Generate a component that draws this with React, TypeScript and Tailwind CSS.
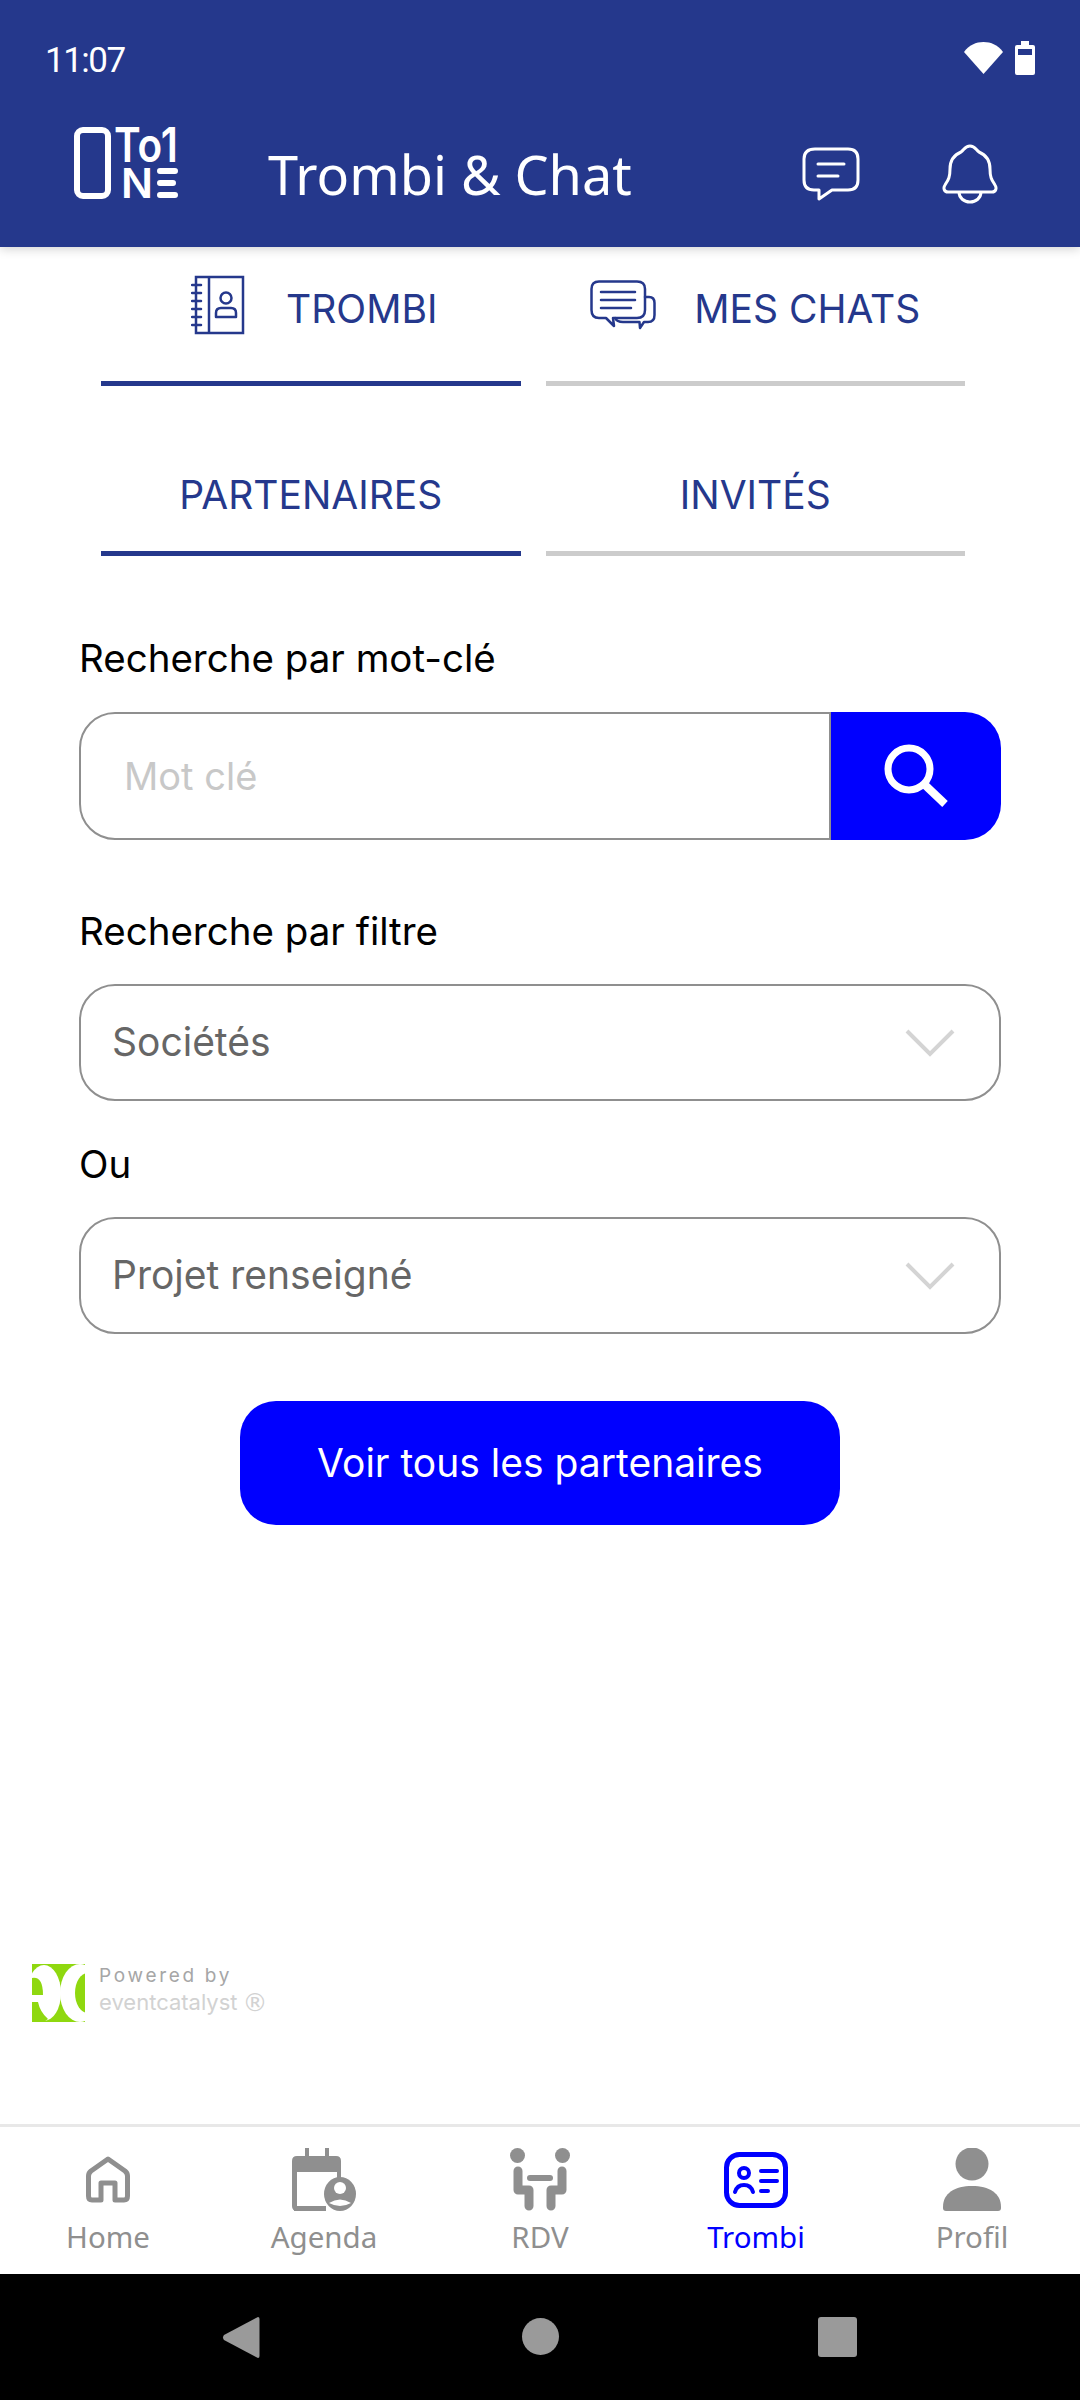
const navy = "text-[#25388c]";

function Logo() {
  return (
    <svg width="106" height="74" viewBox="0 0 106 74" className="overflow-visible text-white">
      <rect x="3" y="3" width="31" height="66" rx="6" fill="none" stroke="currentColor" strokeWidth="6" />
      <text x="40" y="35" fontFamily="Inter, sans-serif" fontWeight="600" fontSize="48" textLength="64" lengthAdjust="spacingAndGlyphs" fill="currentColor">To1</text>
      <text x="47" y="71" fontFamily="Inter, sans-serif" fontWeight="600" fontSize="41" textLength="32" lengthAdjust="spacingAndGlyphs" fill="currentColor">N</text>
      <path d="M86 44H101M86 56H99M86 68H101" stroke="currentColor" strokeWidth="6" strokeLinecap="round" />
    </svg>
  );
}

function EcLogo() {
  return (
    <svg width="53" height="58" viewBox="0 0 53 58">
      <rect width="53" height="58" fill="#8fd80f" />
      <ellipse cx="12" cy="29" rx="17" ry="28" fill="white" />
      <path d="M0 14Q11 12 11 31H0Z" fill="#8fd80f" />
      <path d="M0 38H6Q8 48 16 55L12 58H0Z" fill="#8fd80f" />
      <ellipse cx="48" cy="29" rx="20" ry="29" fill="white" />
      <ellipse cx="56" cy="29" rx="13" ry="20" fill="#8fd80f" />
    </svg>
  );
}

function ChatIcon() {
  return (
    <svg width="58" height="55" viewBox="0 0 58 55" fill="none" stroke="white" strokeWidth="3" strokeLinejoin="round" strokeLinecap="round">
      <path d="M13 2H46Q56 2 56 12V33Q56 43 46 43H30L17 52V43H12Q2 43 2 33V12Q2 2 13 2Z" />
      <path d="M16 17H42M16 29H36" />
    </svg>
  );
}

function BellIcon() {
  return (
    <svg width="56" height="60" viewBox="0 0 56 60" fill="none" stroke="white" strokeWidth="3" strokeLinejoin="round">
      <path d="M28 2C33 2 34 6 37 8C44 11 48 17 48 25C48 34 50 36 53 41C55 44 54 48 50 48H6C2 48 1 44 3 41C6 36 8 34 8 25C8 17 12 11 19 8C22 6 23 2 28 2Z" />
      <path d="M17 48C17 54 22 58 28 58C34 58 39 54 39 48" />
    </svg>
  );
}

function NotebookIcon() {
  return (
    <svg width="54" height="60" viewBox="0 0 54 60" fill="none" stroke="#25388c" strokeWidth="2.5">
      <path d="M5 2H52V58H5Z" />
      <path d="M18 2V58" strokeWidth="2.5" />
      <path d="M1 10H10M1 18H10M1 26H10M1 34H10M1 42H10M1 50H10" strokeLinecap="round" />
      <circle cx="35" cy="23" r="5.5" />
      <path d="M25 42V38Q25 33 30 33H40Q45 33 45 38V42Z" strokeLinejoin="round" />
    </svg>
  );
}

function ChatsIcon() {
  return (
    <svg width="66" height="50" viewBox="0 0 66 50" fill="none" stroke="#25388c" strokeWidth="2.5" strokeLinejoin="round" strokeLinecap="round">
      <path d="M9 1.5H47Q55 1.5 55 9V30Q55 38 47 38H23L24 46L16 38H9Q1.5 38 1.5 30V9Q1.5 1.5 9 1.5Z" />
      <path d="M55 17H59Q64.5 17 64.5 23V35Q64.5 42 58 42H54L50 48L49.5 42H33Q27 42 25 38" />
      <path d="M11 12H45M11 20H45M11 28H41" />
    </svg>
  );
}

function TabRow({ items, className }: { items: { label: string; icon?: React.ReactNode; active?: boolean; extra?: string }[]; className: string }) {
  return (
    <div className={`grid grid-cols-2 gap-x-[25px] pl-[101px] pr-[115px] ${className}`}>
      {items.map((item) => (
        <div
          key={item.label}
          className={`flex items-center justify-center border-b-[5px] pb-[10px] ${item.active ? "border-[#25388c]" : "border-[#cccccc]"} ${item.extra ?? ""}`}
        >
          {item.icon ? <div className="mb-[8px] flex">{item.icon}</div> : null}
          <span className={`text-[39px] ${navy}`}>{item.label}</span>
        </div>
      ))}
    </div>
  );
}

function Chevron() {
  return (
    <svg width="50" height="28" viewBox="0 0 50 28" fill="none" stroke="#d4d4d4" strokeWidth="4">
      <path d="M2 2L25 25L48 2" />
    </svg>
  );
}

function Select({ label }: { label: string }) {
  return (
    <div className="flex h-[117px] items-center justify-between rounded-[36px] border-2 border-[#8f8f8f] pl-[31px] pr-[44px] text-[39px] text-[#666666]">
      <span>{label}</span>
      <Chevron />
    </div>
  );
}

function NavItem({ label, icon, active }: { label: string; icon: React.ReactNode; active?: boolean }) {
  return (
    <div className="flex flex-col items-center">
      <div className="flex h-[63px] items-center">{icon}</div>
      <span className={`mt-[6px] font-['Noto_Sans',sans-serif] text-[29.5px] leading-[40px] ${active ? "text-[#0000ff]" : "text-[#8f8f8f]"}`}>{label}</span>
    </div>
  );
}

export default function App() {
  return (
    <div className="flex h-[2400px] w-[1080px] flex-col overflow-hidden bg-white font-['Inter',sans-serif]">
      <header className="relative z-10 h-[247px] bg-[#25388c] shadow-[0_2px_10px_rgba(0,0,0,0.18)]">
        <div className="flex h-[116px] items-center justify-between pl-[45px] pr-[45px]">
          <span className="mt-[6px] font-['Roboto',sans-serif] text-[35px] tracking-[-1.5px] text-white">11:07</span>
          <div className="flex items-center gap-[12px]">
            <svg width="39" height="32" viewBox="0 0 39 32" fill="white">
              <path d="M0 10C5 3 12 0 19.5 0C27 0 34 3 39 10L19.5 32Z" />
            </svg>
            <svg width="20" height="34" viewBox="0 0 20 34" fill="white">
              <path d="M6 0H14V4H18Q20 4 20 6V32Q20 34 18 34H2Q0 34 0 32V6Q0 4 2 4H6Z" />
              <rect x="3" y="8" width="14" height="6" fill="#25388c" />
            </svg>
          </div>
        </div>
        <div className="mt-[11px] flex h-[94px] items-center pl-[74px]">
          <div className="flex self-start">
            <Logo />
          </div>
          <h1 className="ml-[88px] font-['Noto_Sans',sans-serif] text-[54px] leading-none text-white">Trombi &amp; Chat</h1>
          <div className="ml-[170px]">
            <ChatIcon />
          </div>
          <div className="ml-[82px]">
            <BellIcon />
          </div>
        </div>
      </header>

      <TabRow
        className="h-[139px]"
        items={[
          { label: "TROMBI", icon: <NotebookIcon />, active: true, extra: "gap-[41px] pl-[7px]" },
          { label: "MES CHATS", icon: <ChatsIcon />, extra: "gap-[38px]" },
        ]}
      />
      <TabRow
        className="h-[170px] pt-[64px]"
        items={[{ label: "PARTENAIRES", active: true }, { label: "INVITÉS" }]}
      />

      <main className="flex flex-col px-[79px] text-black">
        <label className="mt-[80px] text-[38.5px] leading-[44px]">Recherche par mot-clé</label>
        <div className="mt-[32px] flex h-[128px]">
          <div className="flex flex-1 items-center rounded-l-[36px] border-2 border-[#8f8f8f] pl-[43px] text-[38px] text-[#c8c8c8]">
            Mot clé
          </div>
          <button className="flex w-[170px] items-center justify-center rounded-r-[36px] bg-[#0000ff]">
            <svg width="66" height="66" viewBox="0 0 66 66" fill="none" stroke="white">
              <circle cx="26" cy="26" r="21" strokeWidth="7" />
              <path d="M42 42L62 61" strokeWidth="8" />
            </svg>
          </button>
        </div>

        <label className="mt-[69px] text-[38.5px] leading-[44px]">Recherche par filtre</label>
        <div className="mt-[31px]">
          <Select label="Sociétés" />
        </div>
        <label className="mt-[41px] text-[38.5px] leading-[44px]">Ou</label>
        <div className="mt-[31px]">
          <Select label="Projet renseigné" />
        </div>

        <button className="mt-[67px] flex h-[124px] w-[600px] items-center justify-center self-center rounded-[36px] bg-[#0000ff] text-[39px] text-white">
          Voir tous les partenaires
        </button>
      </main>

      <div className="mb-[102px] mt-auto flex items-center pl-[32px]">
        <EcLogo />
        <div className="ml-[14px] -mt-[8px] flex flex-col">
          <span className="text-[19px] leading-[26px] tracking-[2.7px] text-[#a6a6a6]">Powered by</span>
          <span className="flex items-center text-[22px] leading-[26px] text-[#d2d2d2]">
            eventcatalyst
            <span className="ml-[5px] font-['DejaVu_Sans',sans-serif] text-[25px] leading-none">®</span>
          </span>
        </div>
      </div>

      <nav className="grid h-[150px] grid-cols-5 border-t-[3px] border-[#e8e8e8] pt-[21px]">
        <NavItem
          label="Home"
          icon={
            <svg width="44" height="47" viewBox="0 0 44 47" fill="none" stroke="#8f8f8f" strokeWidth="5" strokeLinejoin="round">
              <path d="M22 3L39 15Q41.5 17 41.5 20V40Q41.5 44 38 44H29V27H15V44H6Q2.500 44 2.500 40V20Q2.500 17 5 15Z" />
            </svg>
          }
        />
        <NavItem
          label="Agenda"
          icon={
            <svg width="64" height="63" viewBox="0 0 64 63" fill="#8f8f8f">
              <path d="M13 0H17V8H33V0H37V8H44Q49 8 49 13V24H5V61H31V63H5Q0 63 0 58V13Q0 8 5 8H13Z" />
              <path d="M5 24H49V30H5ZM2 55H34V63H2Z" fill="#8f8f8f" />
              <rect x="5" y="24" width="40" height="34" fill="white" />
              <ellipse cx="48" cy="46" rx="16" ry="17" />
              <circle cx="48" cy="40" r="6" fill="white" />
              <path d="M37 55Q48 48 59 55Q48 61 37 55Z" fill="white" />
            </svg>
          }
        />
        <NavItem
          label="RDV"
          icon={
            <svg width="60" height="63" viewBox="0 0 60 63" fill="none" stroke="#8f8f8f" strokeLinecap="round" strokeLinejoin="round">
              <circle cx="7.500" cy="7.500" r="7.500" fill="#8f8f8f" stroke="none" />
              <circle cx="52.500" cy="7.500" r="7.500" fill="#8f8f8f" stroke="none" />
              <path d="M8 23V42H19V58M52 23V42H41V58" strokeWidth="9" />
              <path d="M20 30H40" strokeWidth="6" />
            </svg>
          }
        />
        <NavItem
          label="Trombi"
          active
          icon={
            <svg width="64" height="56" viewBox="0 0 64 56" fill="none" stroke="#0000ff" strokeWidth="5" strokeLinecap="round">
              <rect x="2.500" y="2.500" width="59" height="51" rx="13" />
              <circle cx="20" cy="21" r="5" strokeWidth="4" />
              <path d="M11 40Q13 33 20 33Q27 33 29 40" strokeWidth="4" />
              <path d="M37 19H53M37 29H53M37 39H44" strokeWidth="4" />
            </svg>
          }
        />
        <NavItem
          label="Profil"
          icon={
            <svg width="58" height="63" viewBox="0 0 58 63" fill="#8f8f8f">
              <circle cx="29" cy="16" r="16.500" />
              <path d="M0 59C0 45 12 38 29 38C46 38 58 45 58 59V60Q58 63 55 63H3Q0 63 0 60Z" />
            </svg>
          }
        />
      </nav>

      <div className="relative flex h-[126px] items-center justify-around bg-black">
        <svg className="absolute left-[222px] top-[42px]" width="38" height="43" viewBox="0 0 38 43" fill="#9a9a9a">
          <path d="M36 1L2 19Q0 21.500 2 24L36 42Q37.500 42 37.500 40V3Q37.500 1 36 1Z" />
        </svg>
        <div className="absolute left-[522px] top-[44px] h-[37px] w-[37px] rounded-full bg-[#9a9a9a]" />
        <div className="absolute left-[818px] top-[43px] h-[40px] w-[39px] rounded-[3px] bg-[#9a9a9a]" />
      </div>
    </div>
  );
}
